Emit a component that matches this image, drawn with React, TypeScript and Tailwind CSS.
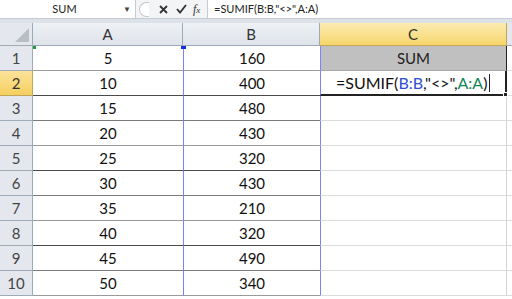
import React from 'react';

const rows: [number, number][] = [
  [5, 160],
  [10, 400],
  [15, 480],
  [20, 430],
  [25, 320],
  [30, 430],
  [35, 210],
  [40, 320],
  [45, 490],
  [50, 340],
];

const font = { fontFamily: 'Lato, "Open Sans", sans-serif' };

const FormulaBar: React.FC = () => (
  <div className="flex h-[19px] items-stretch bg-white border-b border-[#c6cbd3] text-[11px] text-[#222]">
    <div className="relative flex w-[136px] items-center justify-center border-r border-[#c6cbd3]">
      <span className="-ml-[6px]">SUM</span>
      <span className="absolute right-[4px] top-[3px] text-[8px] text-[#444]">▼</span>
    </div>
    <div className="flex w-[72px] items-center bg-[#f3f4f6] border-r border-[#c6cbd3]">
      <div className="ml-[3px] h-[15px] w-[10px] rounded-l-full border border-r-0 border-[#c3c8cf] bg-white" />
      <svg className="ml-[10px]" width="9" height="9" viewBox="0 0 9 9">
        <path d="M1 1 L8 8 M8 1 L1 8" stroke="#333" strokeWidth="1.8" />
      </svg>
      <svg className="ml-[8px]" width="11" height="10" viewBox="0 0 11 10">
        <path d="M1 5 L4 8.5 L10 1" stroke="#333" strokeWidth="1.9" fill="none" />
      </svg>
      <span className="ml-[6px] italic text-[12px] leading-none text-[#333]" style={{ fontFamily: '"Liberation Serif", serif' }}>
        f<span className="text-[9px]">x</span>
      </span>
    </div>
    <div className="flex items-center pl-[6px] text-[11px]">=SUMIF(B:B,"&lt;&gt;",A:A)</div>
  </div>
);

const App: React.FC = () => {
  return (
    <div className="h-[299px] w-[512px] overflow-hidden bg-white" style={font}>
      <FormulaBar />
      <div className="h-[4px] bg-[#dde2e8]" />
      <div className="grid grid-cols-[33px_150px_137px_187px_5px] grid-rows-[23px_repeat(10,25px)]">
        {/* header row */}
        <div className="relative flex items-end justify-end border-r border-b border-[#9eaab8] bg-[#e4e8ee]">
          <div
            className="mb-[3px] mr-[3px] h-[14px] w-[14px] bg-[#b9bec6]"
            style={{ clipPath: 'polygon(100% 0, 100% 100%, 0 100%)' }}
          />
        </div>
        <div className="flex items-center justify-center border-r border-b border-[#9eaab8] bg-gradient-to-b from-[#eef1f5] to-[#dfe4ea] text-[15px] text-[#333]">A</div>
        <div className="flex items-center justify-center border-r border-b border-[#9eaab8] bg-gradient-to-b from-[#eef1f5] to-[#dfe4ea] text-[15px] text-[#333]">B</div>
        <div className="flex items-center justify-center border-r border-b border-[#c2a65a] bg-gradient-to-b from-[#fcebb0] to-[#f6d66b] text-[15px] text-[#333]">C</div>
        <div className="border-b border-[#9eaab8] bg-[#e4e8ee]" />

        {rows.map(([a, b], i) => {
          const n = i + 1;
          const sel = n === 2;
          const line = i % 3 === 0 ? 'border-[#9a9a9a]' : i % 3 === 1 ? 'border-[#4a4a4a]' : 'border-[#7a7a7a]';
          return (
            <React.Fragment key={n}>
              <div
                className={`flex items-center justify-center border-r border-b text-[15px] ${
                  sel
                    ? 'border-[#c2a65a] bg-gradient-to-b from-[#fbe39a] to-[#f5cf5e] text-[#333]'
                    : 'border-[#9eaab8] bg-[#e4e8ee] text-[#444]'
                }`}
              >
                {n}
              </div>
              <div className={`relative flex items-center justify-center border-b ${line} text-[15px] text-[#111]`}>
                {n === 1 && <div className="absolute left-0 top-0 h-[3px] w-[3px] bg-[#1e9b3a]" />}
                {a}
              </div>
              <div className={`relative flex items-center justify-center border-b ${line} border-l border-l-[#8080ff] text-[15px] text-[#111]`}>
                {n === 1 && <div className="absolute -left-[3px] top-0 h-[3px] w-[5px] bg-[#1030e0]" />}
                {b}
              </div>
              {n === 1 ? (
                <div className="flex items-center justify-center border-l border-l-[#8080ff] border-r border-r-[#222] border-b border-b-[#aaa] bg-[#c0c0c0] text-[15px] text-[#222]">
                  SUM
                </div>
              ) : sel ? (
                <div className="relative flex items-center border-l border-l-[#8080ff] border-r-2 border-r-[#222] border-b-2 border-b-[#222] pl-[15px] text-[16px] text-[#111]">
                  <span>=SUMIF(</span>
                  <span className="text-[#2b50d8]">B:B</span>
                  <span>,"&lt;&gt;",</span>
                  <span className="text-[#13875a]">A:A</span>
                  <span>)</span>
                  <span className="ml-[2px] h-[18px] w-px bg-[#222]" />
                  <div className="absolute -bottom-[3px] -right-[3px] h-[5px] w-[5px] border border-white bg-[#222]" />
                </div>
              ) : (
                <div className="border-l border-l-[#8080ff] border-r border-r-[#d4d4d4] border-b border-b-[#dcdcdc]" />
              )}
              <div className="border-b border-[#dcdcdc]" />
            </React.Fragment>
          );
        })}
      </div>
    </div>
  );
};

export default App;
